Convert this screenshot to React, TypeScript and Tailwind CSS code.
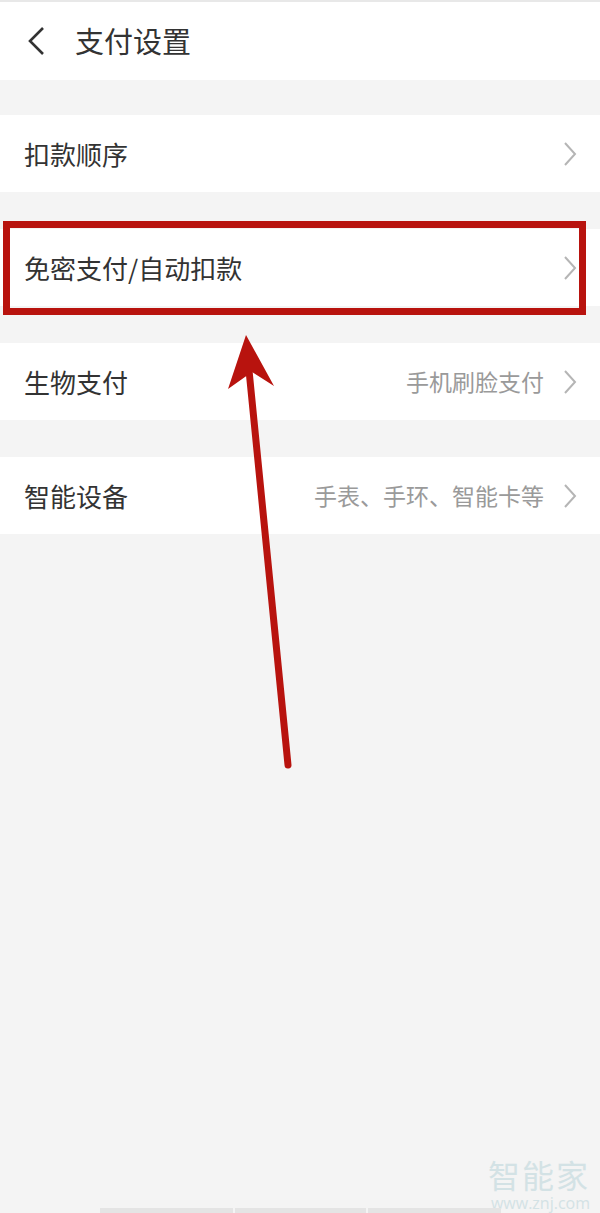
import React from "react";

const font = { fontFamily: '"Noto Sans CJK SC", "Noto Sans", sans-serif' };

function Chevron() {
  return (
    <svg width="16" height="28" viewBox="0 0 16 28" className="shrink-0">
      <path d="M3 3 L13 14 L3 25" fill="none" stroke="#b5b5b5" strokeWidth="2" />
    </svg>
  );
}

function Row({ label, value }: { label: string; value?: string }) {
  return (
    <div className="h-[77px] bg-white flex items-center pl-[24px] pr-[22px]">
      <span className="text-[26px] text-[#333] flex-1">{label}</span>
      {value && <span className="text-[23px] text-[#9a9a9a] mr-[18px]">{value}</span>}
      <Chevron />
    </div>
  );
}

export default function App() {
  return (
    <div className="relative w-[600px] h-[1213px] bg-[#f4f4f4] overflow-hidden" style={font}>
      <div className="h-[2px] bg-[#e8e8e8]" />
      <div className="h-[78px] bg-white flex items-center pl-[26px]">
        <svg width="22" height="30" viewBox="0 0 22 30">
          <path d="M17 2 L4 15 L17 28" fill="none" stroke="#333" strokeWidth="2.6" />
        </svg>
        <span className="ml-[27px] text-[29px] text-[#333]">支付设置</span>
      </div>
      <div className="h-[35px]" />
      <div className="flex flex-col gap-[37px]">
        <Row label="扣款顺序" />
        <div className="flex flex-col gap-[37px]">
          <Row label="免密支付/自动扣款" />
          <Row label="生物支付" value="手机刷脸支付" />
        </div>
        <Row label="智能设备" value="手表、手环、智能卡等" />
      </div>

      {/* red highlight box */}
      <div className="absolute left-[3px] top-[221px] w-[583px] h-[94px] border-[7px] border-[#b8130e]" />

      {/* arrow */}
      <svg className="absolute left-0 top-0" width="600" height="1213" viewBox="0 0 600 1213">
        <line x1="288" y1="765" x2="248" y2="360" stroke="#b8130e" strokeWidth="7" strokeLinecap="round" />
        <path d="M246 335 L274 386 L252 372 L228 389 Z" fill="#b8130e" />
      </svg>

      {/* watermark */}
      <div className="absolute right-[10px] top-[1158px] flex flex-col items-end gap-[6px]">
        <span className="text-[32px] leading-[32px] text-[#d3e2e5] tracking-[2px]">智能家</span>
        <span className="text-[16px] leading-[15px] text-[#d3e2e5]" style={{ fontFamily: '"Open Sans", sans-serif' }}>www.znj.com</span>
      </div>

      {/* bottom bar */}
      <div className="absolute left-[100px] top-[1208px] flex gap-[2px]">
        <div className="w-[133px] h-[5px] bg-[#e4e4e4]" />
        <div className="w-[131px] h-[5px] bg-[#e4e4e4]" />
        <div className="w-[133px] h-[5px] bg-[#e4e4e4]" />
      </div>
    </div>
  );
}
